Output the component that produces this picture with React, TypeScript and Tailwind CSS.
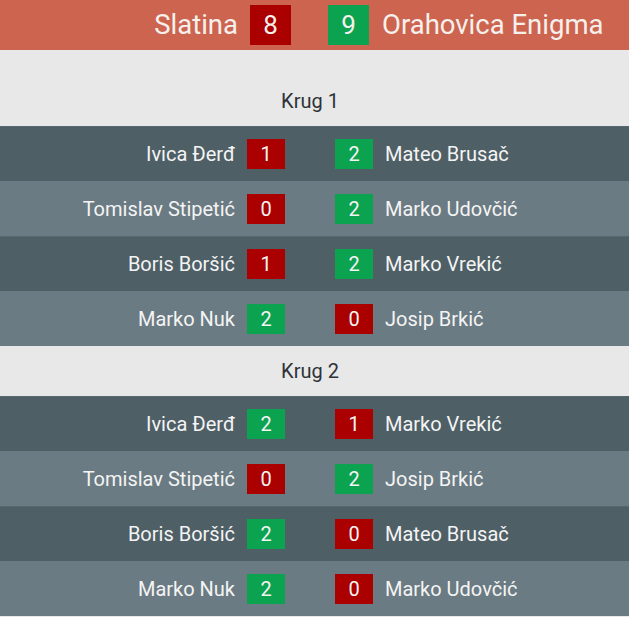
import React from "react";

type Match = { l: string; ls: number; r: string; rs: number };

const rounds: { title: string; matches: Match[] }[] = [
  {
    title: "Krug 1",
    matches: [
      { l: "Ivica Đerđ", ls: 1, r: "Mateo Brusač", rs: 2 },
      { l: "Tomislav Stipetić", ls: 0, r: "Marko Udovčić", rs: 2 },
      { l: "Boris Boršić", ls: 1, r: "Marko Vrekić", rs: 2 },
      { l: "Marko Nuk", ls: 2, r: "Josip Brkić", rs: 0 },
    ],
  },
  {
    title: "Krug 2",
    matches: [
      { l: "Ivica Đerđ", ls: 2, r: "Marko Vrekić", rs: 1 },
      { l: "Tomislav Stipetić", ls: 0, r: "Josip Brkić", rs: 2 },
      { l: "Boris Boršić", ls: 2, r: "Mateo Brusač", rs: 0 },
      { l: "Marko Nuk", ls: 2, r: "Marko Udovčić", rs: 0 },
    ],
  },
];

function Box({ v, win }: { v: number; win: boolean }) {
  return (
    <div
      className={`w-[38px] h-[30px] flex items-center justify-center text-[20px] leading-none text-[#f4f4f4] ${
        win ? "bg-[#0ca350]" : "bg-[#aa0000]"
      }`}
    >
      {v}
    </div>
  );
}

export default function App() {
  return (
    <div
      className="w-[629px] h-[617px] bg-[#e8e8e8] overflow-hidden"
      style={{ fontFamily: "Roboto, 'Noto Sans', sans-serif" }}
    >
      <div className="h-[50px] bg-[#cc6450] grid grid-cols-[291px_37px_1fr] items-center text-[27.5px] text-[#f6f0ec]">
        <div className="flex items-center justify-end gap-[12px]">
          <span>Slatina</span>
          <div className="w-[41px] h-[40px] bg-[#aa0000] flex items-center justify-center text-[26px]">8</div>
        </div>
        <div />
        <div className="flex items-center gap-[13px]">
          <div className="w-[41px] h-[40px] bg-[#0ca350] flex items-center justify-center text-[26px]">9</div>
          <span>Orahovica Enigma</span>
        </div>
      </div>
      <div className="pt-[26px]">
        {rounds.map((round) => (
          <div key={round.title}>
            <div className="h-[50px] grid grid-cols-[285px_50px_1fr] items-center text-[20px] text-[#2e3338]">
              <div className="col-span-3 pr-[9px] text-center">{round.title}</div>
            </div>
            {round.matches.map((m, i) => (
              <div
                key={i}
                className={`h-[55px] grid grid-cols-[285px_50px_1fr] items-center text-[20px] text-[#f4f4f4] ${
                  i % 2 === 0 ? "bg-[#4e5f66] border-t border-[#58686f]" : "bg-[#6b7b83]"
                }`}
              >
                <div className="flex items-center justify-end gap-[12px]">
                  <span>{m.l}</span>
                  <Box v={m.ls} win={m.ls > m.rs} />
                </div>
                <div />
                <div className="flex items-center gap-[12px]">
                  <Box v={m.rs} win={m.rs > m.ls} />
                  <span>{m.r}</span>
                </div>
              </div>
            ))}
          </div>
        ))}
      </div>
    </div>
  );
}
